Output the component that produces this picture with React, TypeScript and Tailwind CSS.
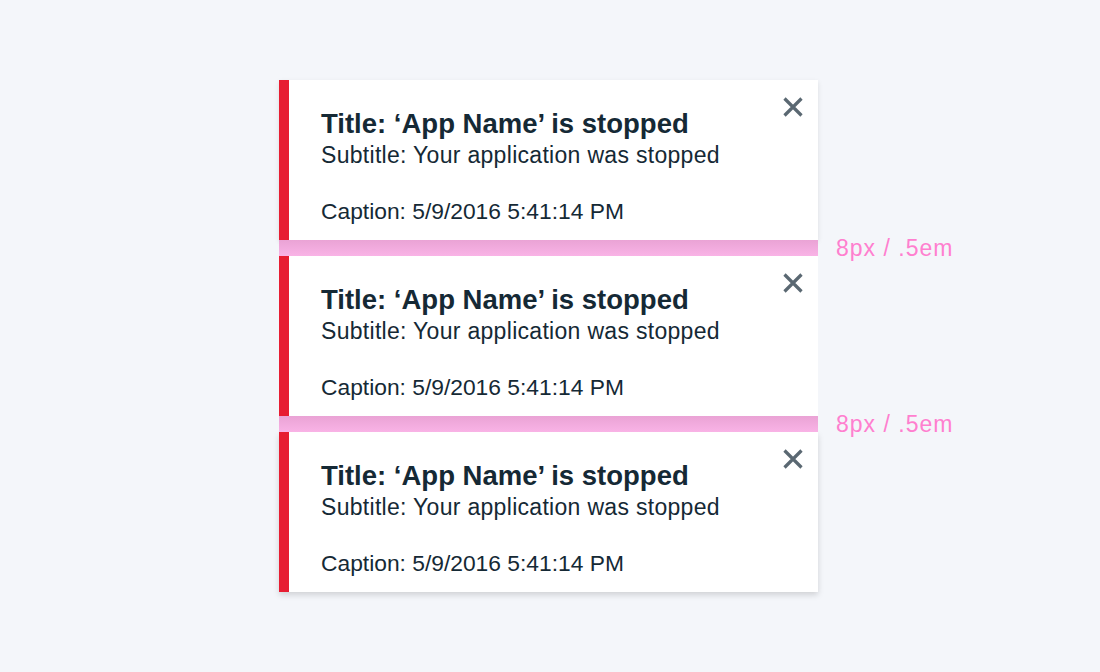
const font = { fontFamily: '"Liberation Sans", Arial, sans-serif' };

function Notification() {
  return (
    <div className="flex h-[160px] w-[539px] bg-white">
      <div className="w-[10px] bg-[#e71d32]" />
      <div className="flex flex-1 justify-between pl-[32px] pr-[14px] pt-[27px]">
        <div className="text-[#152935]">
          <h3 className="text-[27.5px] font-bold leading-[34px]">Title: ‘App Name’ is stopped</h3>
          <p className="text-[23px] leading-[28px] tracking-[0.3px]">Subtitle: Your application was stopped</p>
          <p className="mt-[28px] text-[22.8px] leading-[28px]">Caption: 5/9/2016 5:41:14 PM</p>
        </div>
        <button className="-mt-[11px] h-[22px] w-[22px] text-[#5a6872]" aria-label="Close">
          <svg viewBox="0 0 22 22" width="22" height="22" fill="none" stroke="currentColor" strokeWidth="3.2">
            <path d="M2.5 2.5L19.5 19.5M19.5 2.5L2.5 19.5" />
          </svg>
        </button>
      </div>
    </div>
  );
}

function Spacer() {
  return (
    <div className="flex h-4 items-center">
      <div className="h-4 w-[539px] bg-gradient-to-b from-[#eaa3d5] to-[#f9b3e6]" />
      <span className="ml-[18px] whitespace-nowrap text-[23px] leading-4 tracking-[1px] text-[#ff7fcf]">8px / .5em</span>
    </div>
  );
}

export default function App() {
  return (
    <div className="min-h-[672px] w-full bg-[#f4f6fa] pl-[279px] pt-[80px]" style={font}>
      <div className="w-[539px] shadow-[0_2px_5px_rgba(0,0,0,0.1)]">
        <Notification />
      </div>
      <Spacer />
      <div className="w-[539px]">
        <Notification />
      </div>
      <Spacer />
      <div className="w-[539px] shadow-[0_3px_6px_rgba(0,0,0,0.15)]">
        <Notification />
      </div>
    </div>
  );
}
